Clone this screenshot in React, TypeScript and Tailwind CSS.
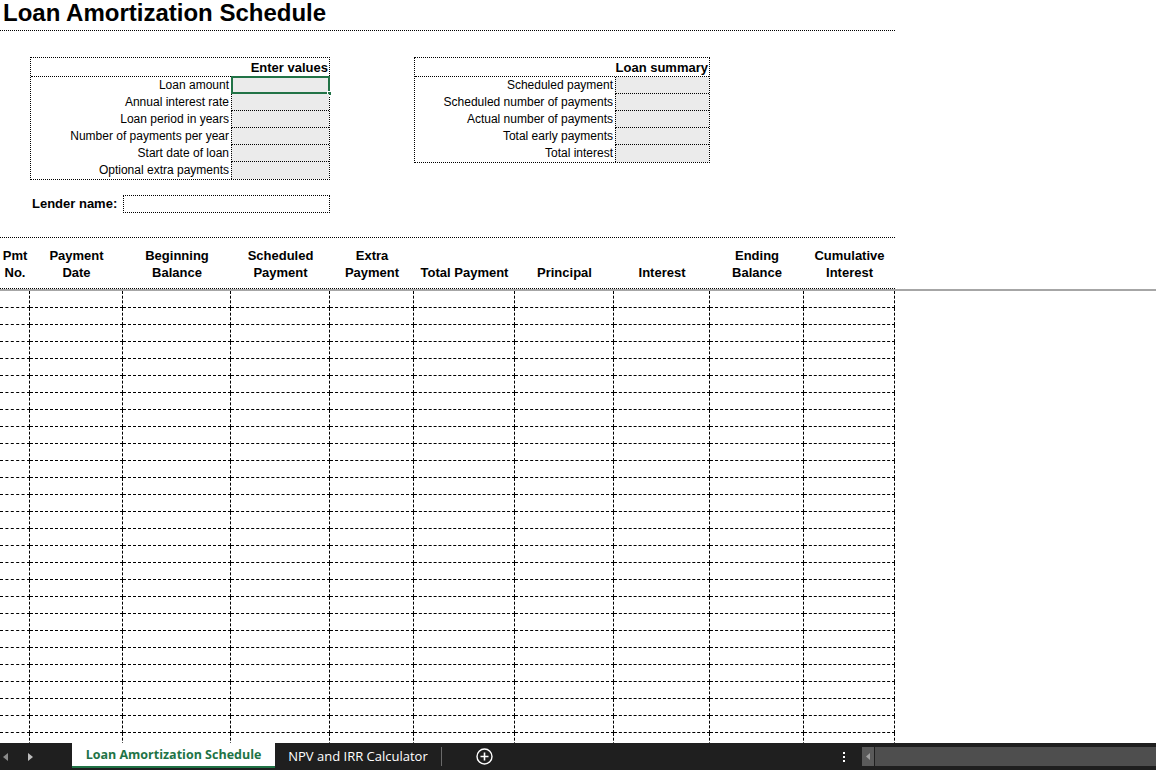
import React from 'react';

const enterLabels = [
  'Loan amount',
  'Annual interest rate',
  'Loan period in years',
  'Number of payments per year',
  'Start date of loan',
  'Optional extra payments',
];

const summaryLabels = [
  'Scheduled payment',
  'Scheduled number of payments',
  'Actual number of payments',
  'Total early payments',
  'Total interest',
];

// column widths match the sheet: 30 | 93 | 108 | 99 | 84 | 101 | 99 | 96 | 94 | 91
const gridCols = 'grid grid-cols-[30px_93px_108px_99px_84px_101px_99px_96px_94px_91px] w-[895px]';

const headers: string[][] = [
  ['Pmt', 'No.'],
  ['Payment', 'Date'],
  ['Beginning', 'Balance'],
  ['Scheduled', 'Payment'],
  ['Extra', 'Payment'],
  ['Total Payment'],
  ['Principal'],
  ['Interest'],
  ['Ending', 'Balance'],
  ['Cumulative', 'Interest'],
];

const InputBox: React.FC<{ title: string; labels: string[]; width: string; labelWidth: string; selectFirst?: boolean }> = ({
  title,
  labels,
  width,
  labelWidth,
  selectFirst,
}) => (
  <div className={`${width} border border-dotted border-black`}>
    <div className="h-[19px] border-b border-dotted border-black flex justify-end items-end pr-[1px] text-[13px] font-bold leading-[17px]">
      {title}
    </div>
    {labels.map((label, i) => (
      <div key={label} className="flex h-[17px]">
        <div className={`${labelWidth} text-right pr-[2px] text-[12px] leading-[17px]`}>{label}</div>
        <div
          className={`flex-1 relative bg-[#ebebeb] border-l border-dotted border-black ${
            i < labels.length - 1 ? 'border-b' : ''
          }`}
        >
          {selectFirst && i === 0 && (
            <div className="absolute -left-[1px] -top-[1px] -right-[1px] -bottom-[1px] border-2 border-[#217346]">
              <div className="absolute -right-[4px] -bottom-[4px] w-[5px] h-[5px] bg-[#217346] border border-white" />
            </div>
          )}
        </div>
      </div>
    ))}
  </div>
);

const App: React.FC = () => {
  const rows = Array.from({ length: 27 });

  return (
    <div
      className="w-[1156px] h-[770px] flex flex-col overflow-hidden bg-white text-black"
      style={{ fontFamily: '"Liberation Sans", Arial, sans-serif' }}
    >
      <div className="flex-1 min-h-0 overflow-hidden">
        {/* title */}
        <div className="w-[895px] h-[31px] border-b border-dotted border-black pl-[3px] text-[24px] font-bold leading-[26px]">
          Loan Amortization Schedule
        </div>

        {/* input / summary boxes */}
        <div className="flex items-start pl-[30px] pt-[26px] gap-[84px]">
          <InputBox title="Enter values" labels={enterLabels} width="w-[300px]" labelWidth="w-[200px]" selectFirst />
          <InputBox title="Loan summary" labels={summaryLabels} width="w-[296px]" labelWidth="w-[200px]" />
        </div>

        <div className="flex items-center pl-[32px] pt-[15px] h-[33px]">
          <span className="text-[13px] font-bold w-[91px]">Lender name:</span>
          <div className="w-[207px] h-[18px] border border-dotted border-black" />
        </div>

        {/* table header */}
        <div className={`${gridCols} mt-[24px] h-[52px] border-t border-b border-dotted border-black`}>
          {headers.map((lines, i) => (
            <div key={i} className="flex flex-col justify-end items-center text-[13px] font-bold leading-[17px] pb-[7px]">
              {lines.map((l) => (
                <span key={l}>{l}</span>
              ))}
            </div>
          ))}
        </div>
        <div className="w-full h-[2px] bg-[#a6a6a6]" />

        {/* rows */}
        <div className="flex flex-col">
          {rows.map((_, r) => (
            <div key={r} className={`${gridCols} h-[17px]`}>
              {headers.map((_, c) => (
                <div key={c} className="border-r border-b border-dashed border-black" />
              ))}
            </div>
          ))}
        </div>
      </div>

      {/* sheet tabs */}
      <div
        className="h-[27px] shrink-0 bg-[#1f1f1f] flex items-stretch text-[13px]"
        style={{ fontFamily: '"Open Sans", "Noto Sans", sans-serif' }}
      >
        <div className="w-[72px] flex items-center gap-[18px] pl-[3px]">
          <svg width="6" height="8" viewBox="0 0 6 8">
            <path d="M5 0 L0 4 L5 8 Z" fill="#8a8a8a" />
          </svg>
          <svg width="6" height="8" viewBox="0 0 6 8">
            <path d="M1 0 L6 4 L1 8 Z" fill="#bdbdbd" />
          </svg>
        </div>
        <div className="w-[203px] bg-white border-b-[2px] border-[#217346] mb-[2px] flex items-center justify-center pt-[2px] text-[#217346] font-bold text-[12.5px]">
          Loan Amortization Schedule
        </div>
        <div className="w-[166px] flex items-center justify-center text-white">NPV and IRR Calculator</div>
        <div className="w-[1px] my-[4px] bg-[#6a6a6a]" />
        <div className="w-[84px] flex items-center justify-center">
          <svg width="17" height="17" viewBox="0 0 17 17" fill="none">
            <circle cx="8.5" cy="8.5" r="7.5" stroke="white" strokeWidth="1.4" />
            <path d="M8.5 4.5 V12.5 M4.5 8.5 H12.5" stroke="white" strokeWidth="1.6" />
          </svg>
        </div>
        <div className="flex-1" />
        <div className="w-[20px] flex flex-col items-center justify-center gap-[2px] mr-[8px]">
          <span className="w-[2px] h-[2px] bg-white" />
          <span className="w-[2px] h-[2px] bg-white" />
          <span className="w-[2px] h-[2px] bg-white" />
        </div>
        <div className="w-[294px] flex items-stretch py-[4px]">
          <div className="w-[12px] bg-[#5a5a5a] flex items-center justify-center">
            <svg width="4" height="7" viewBox="0 0 4 7">
              <path d="M4 0 L0 3.5 L4 7 Z" fill="#a0a0a0" />
            </svg>
          </div>
          <div className="flex-1 bg-[#4e4e4e] ml-[1px]" />
        </div>
      </div>
    </div>
  );
};

export default App;
